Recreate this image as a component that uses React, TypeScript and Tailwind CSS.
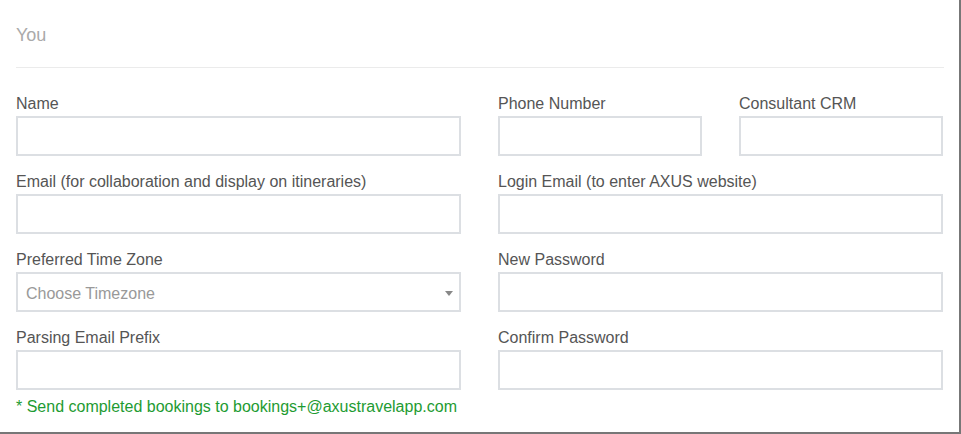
import { ChangeEvent, useState } from "react";

interface FieldProps {
  label: string;
  type?: string;
}

function Field({ label, type = "text" }: FieldProps) {
  const [value, setValue] = useState("");
  return (
    <div className="flex flex-col">
      <label className="text-[16px] leading-[23px] mb-px text-[#555]">{label}</label>
      <input
        type={type}
        value={value}
        onChange={(e: ChangeEvent<HTMLInputElement>) => setValue(e.target.value)}
        className="h-10 w-full border-2 border-[#dcdfe3] bg-white px-2 text-[16px] text-[#333] outline-none"
      />
    </div>
  );
}

function TimezoneSelect() {
  return (
    <div className="flex flex-col">
      <label className="text-[16px] leading-[23px] mb-px text-[#555]">Preferred Time Zone</label>
      <div className="relative h-10 w-full border-2 border-[#dcdfe3] bg-white flex items-center pl-2 pr-6 pt-[3px]">
        <span className="text-[16px] text-[#999]">Choose Timezone</span>
        {/* caret */}
        <span className="absolute right-[6px] top-[17px] w-0 h-0 border-l-[4px] border-r-[4px] border-t-[5px] border-l-transparent border-r-transparent border-t-[#888]" />
      </div>
    </div>
  );
}

export default function App() {
  return (
    <div
      className="w-full h-[434px] bg-white border-r-2 border-b-2 border-[#777] pl-4 pr-[15px]"
      style={{ fontFamily: '"Liberation Sans", Arial, sans-serif' }}
    >
      {/* Header */}
      <h2 className="pt-[23px] text-[18px] leading-[24px] font-normal text-[#aaa]">You</h2>
      <div className="mt-[20px] h-px bg-[#ebebeb]" />

      {/* Form */}
      <div className="mt-[24px] grid grid-cols-[445px_445px] gap-x-[37px]">
        <div className="flex flex-col gap-[14px]">
          <Field label="Name" />
          <Field label="Email (for collaboration and display on itineraries)" type="email" />
          <TimezoneSelect />
          <div className="flex flex-col">
            <Field label="Parsing Email Prefix" />
            <p className="mt-[7px] text-[16px] leading-[20px] text-[#1e9b32]">
              * Send completed bookings to bookings+@axustravelapp.com
            </p>
          </div>
        </div>

        <div className="flex flex-col gap-[14px]">
          <div className="grid grid-cols-[204px_204px] gap-x-[37px]">
            <Field label="Phone Number" type="tel" />
            <Field label="Consultant CRM" />
          </div>
          <Field label="Login Email (to enter AXUS website)" type="email" />
          <Field label="New Password" type="password" />
          <Field label="Confirm Password" type="password" />
        </div>
      </div>
    </div>
  );
}
